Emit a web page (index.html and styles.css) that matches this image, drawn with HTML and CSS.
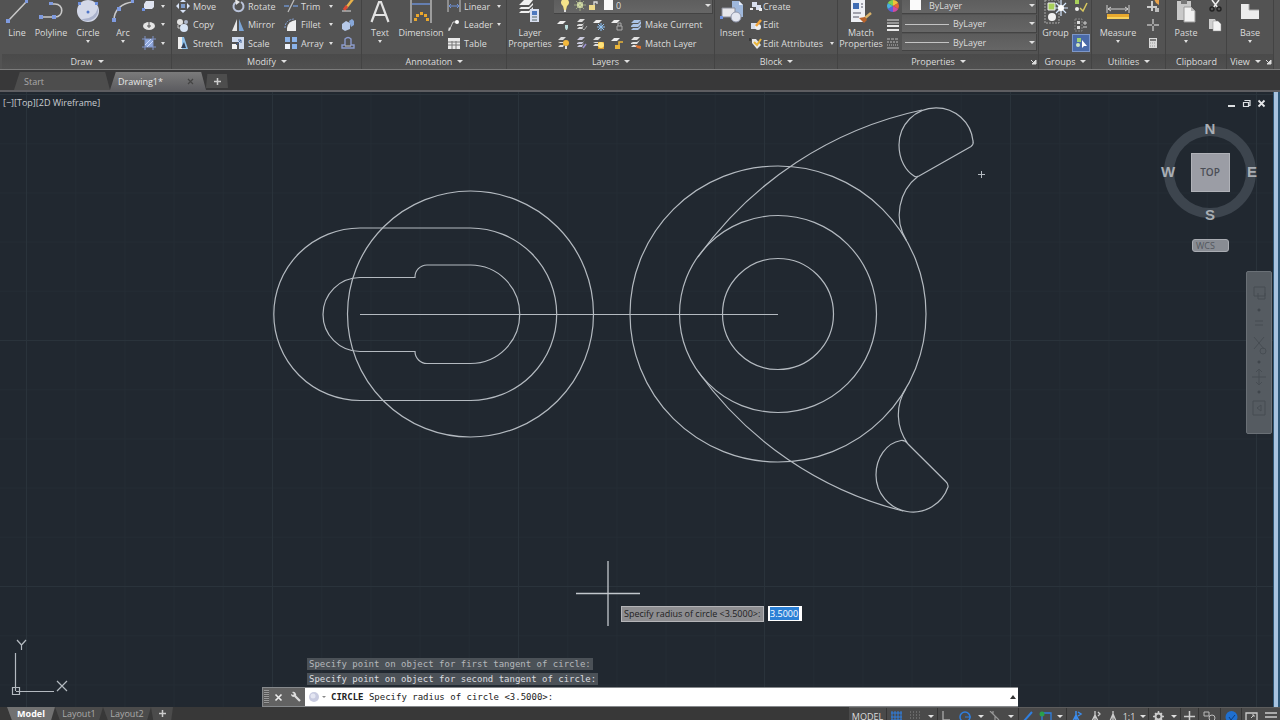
FILE: index.html
```html
<!DOCTYPE html>
<html lang="en">
<head>
<meta charset="utf-8">
<title>Drawing1</title>
<link rel="stylesheet" href="styles.css">
</head>
<body>
<header class="ribbon">
  <section class="panel p-draw">
    <div class="tools">
      <button class="big"><svg width="24" height="24" viewBox="0 0 24 24"><path d="M3 21L22 1" stroke="#c9c9c9" stroke-width="1.5"/><path d="M1 19h4v4h-4zM20 0h3v3h-3z" fill="#7f9be0"/></svg><span>Line</span></button>
      <button class="big"><svg width="26" height="24" viewBox="0 0 26 24"><path d="M3 17H17C26 17 26 4 17 4H12" fill="none" stroke="#c9c9c9" stroke-width="1.6"/><path d="M1 15h4v4h-4zM14 15h4v4h-4zM11 2h4v3h-4z" fill="#7f9be0"/></svg><span>Polyline</span></button>
      <button class="big"><svg width="24" height="24" viewBox="0 0 24 24"><circle cx="12" cy="11" r="11" fill="#d3d8e8"/><path d="M5 19A11 11 0 0 0 22 8Q18 20 5 19" fill="#aab2cc"/><circle cx="12" cy="12" r="1.5" fill="#4f75c8"/><path d="M2 2h3v3h-3zM19 2h3v3h-3z" fill="#6f91df"/></svg><span>Circle</span><i class="caret"></i></button>
      <button class="big"><svg width="24" height="24" viewBox="0 0 24 24"><path d="M3 20C3 10 11 3 22 2" fill="none" stroke="#c9c9c9" stroke-width="1.6"/><path d="M1 18h4v4h-4zM6 7h4v4h-4zM20 0h3v3h-3z" fill="#7f9be0"/></svg><span>Arc</span><i class="caret"></i></button>
      <div class="col">
        <button class="row" aria-label="Rectangle"><svg width="14" height="14" viewBox="0 0 14 14"><path d="M2 5l2-3h8v6l-2 2H2z" fill="#dfe3ef"/><path d="M0 9h3v3h-3z" fill="#6f91df"/></svg><i class="caret"></i></button>
        <button class="row" aria-label="Ellipse"><svg width="14" height="14" viewBox="0 0 14 14"><ellipse cx="7" cy="8" rx="6" ry="4" fill="#e6e6e6"/><path d="M7 3v7M5 8h4" stroke="#555"/></svg><i class="caret"></i></button>
        <button class="row" aria-label="Hatch"><svg width="14" height="14" viewBox="0 0 14 14"><path d="M3 3h8v8h-8z" fill="#8fa8dc"/><path d="M0 3h14M0 11h14M3 0v14M11 0v14" stroke="#8094c8"/><path d="M3 9l6-6M5 11l6-6" stroke="#cfdcff"/></svg><i class="caret"></i></button>
      </div>
    </div>
    <h2>Draw<i class="caret"></i></h2>
  </section>

  <section class="panel p-modify">
    <div class="tools">
      <div class="col">
        <button class="row"><svg width="14" height="14" viewBox="0 0 14 14"><path d="M7 0l3 3H4zM7 14l3-3H4zM0 7l3-3v6zM14 7l-3-3v6z" fill="#d8e3f7"/><path d="M5 5h4v4h-4z" fill="#7d9ac8"/></svg>Move</button>
        <button class="row"><svg width="14" height="14" viewBox="0 0 14 14"><circle cx="4" cy="4" r="3" fill="#e2e2e2"/><circle cx="10" cy="4" r="2" fill="#aeb8cc"/><circle cx="8" cy="10" r="4" fill="#d7e4f6"/><path d="M2 7v3h2" fill="none" stroke="#ccc"/></svg>Copy</button>
        <button class="row"><svg width="14" height="14" viewBox="0 0 14 14"><path d="M2 1h6l4 12H2z" fill="#8fc0ea"/><path d="M2 1h4v12H2z" fill="#eee"/><path d="M5 12l3-6 2 6z" fill="#333f55"/></svg>Stretch</button>
      </div>
      <div class="col">
        <button class="row"><svg width="14" height="14" viewBox="0 0 14 14"><path d="M5 3A5 5 0 1 0 10 3" fill="none" stroke="#b9c3da" stroke-width="2"/><path d="M4 0l5 3-4 3z" fill="#e7e7e7"/></svg>Rotate</button>
        <button class="row"><svg width="14" height="14" viewBox="0 0 14 14"><path d="M6 1v12H1z" fill="#e7e7e7"/><path d="M8 1v12h5z" fill="#7ba4d5"/></svg>Mirror</button>
        <button class="row"><svg width="14" height="14" viewBox="0 0 14 14"><path d="M1 1h12v12H8V6H1z" fill="#cfdaee"/><path d="M1 8h5v5H1z" fill="#f3f3f3"/><path d="M5 9l5-5M7 4h3v3" stroke="#43649a" fill="none"/></svg>Scale</button>
      </div>
      <div class="col">
        <button class="row"><svg width="14" height="14" viewBox="0 0 14 14"><path d="M0 7h5M9 7h5" stroke="#6f91c8" stroke-width="1.5"/><path d="M4 13L10 1" stroke="#bbb" stroke-width="1.3"/></svg>Trim<i class="caret dot"></i></button>
        <button class="row"><svg width="14" height="14" viewBox="0 0 14 14"><path d="M3 13V10Q4 3 12 2V13z" fill="#eee"/><path d="M1 10Q1 2 10 1" fill="none" stroke="#86a6dc" stroke-dasharray="2 1"/></svg>Fillet<i class="caret dot"></i></button>
        <button class="row"><svg width="14" height="14" viewBox="0 0 14 14"><path d="M1 1h5v5H1zM8 1h5v5H8zM8 8h5v5H8z" fill="#8ab2e8"/><path d="M1 8h5v5H1z" fill="#eef2fa"/></svg>Array<i class="caret dot"></i></button>
      </div>
      <div class="col">
        <button class="row" aria-label="Erase"><svg width="14" height="14" viewBox="0 0 14 14"><path d="M12 0l-7 9" stroke="#e8b24a" stroke-width="2.5"/><path d="M6 7l-3 4" stroke="#d94a35" stroke-width="3"/><path d="M1 12h9" stroke="#ddd"/></svg></button>
        <button class="row" aria-label="Explode"><svg width="14" height="14" viewBox="0 0 14 14"><path d="M1 6l4-3 4 2v6l-5 2-3-2z" fill="#b6c9e8"/><path d="M8 3l3-2 2 2v4l-3 2z" fill="#87a7d8"/></svg></button>
        <button class="row" aria-label="Offset"><svg width="14" height="14" viewBox="0 0 14 14"><path d="M1 12h12V9h-3V3Q7 0 4 3v6H1z" fill="none" stroke="#8b9bcd" stroke-width="1.4"/><path d="M4 10h6" stroke="#ccc"/></svg></button>
      </div>
    </div>
    <h2>Modify<i class="caret"></i></h2>
  </section>

  <section class="panel p-annot">
    <div class="tools">
      <button class="big"><svg width="20" height="24" viewBox="0 0 20 24"><path d="M1.500 22L9 2h2l7.500 20M4.500 15h11" fill="none" stroke="#e2e2e2" stroke-width="2.200"/></svg><span>Text</span><i class="caret"></i></button>
      <button class="big"><svg width="24" height="24" viewBox="0 0 24 24"><path d="M2 0v23M22 0v23" stroke="#bdbdbd" stroke-width="1.400"/><path d="M3 4h18" stroke="#6e92da" stroke-width="1.400"/><path d="M5 18h3v3h-3zM7 14h3v3h-3zM11 12h3v3h-3zM15 14h3v3h-3zM17 18h3v3h-3z" fill="#e9a62c"/></svg><span>Dimension</span></button>
      <div class="col">
        <button class="row"><svg width="14" height="14" viewBox="0 0 14 14"><path d="M1 1v12M13 1v12" stroke="#c9c9c9"/><path d="M2 7h10M4 5L2 7l2 2M10 5l2 2-2 2" stroke="#6e92da" fill="none"/></svg>Linear<i class="caret dot"></i></button>
        <button class="row"><svg width="14" height="14" viewBox="0 0 14 14"><path d="M2 13L6 4h4" stroke="#c9c9c9" fill="none"/><circle cx="10" cy="4" r="2" fill="#fff"/><path d="M1 13l1-4 2 2z" fill="#ddd"/></svg>Leader<i class="caret dot"></i></button>
        <button class="row"><svg width="14" height="14" viewBox="0 0 14 14"><path d="M1 2h12v11H1z" fill="#e9e9e9"/><path d="M1 6h12M1 9h12M5 5v8M9 5v8" stroke="#777"/></svg>Table</button>
      </div>
    </div>
    <h2>Annotation<i class="caret"></i></h2>
  </section>

  <section class="panel p-layers">
    <div class="tools">
      <button class="big"><svg width="24" height="24" viewBox="0 0 24 24"><path d="M1 5l5-5h9l-4 5zM1 9l2-2h8l4-4v2l-4 4zM1 13l2-2h8l4-4v2l-4 4z" fill="#f0f0f0"/><path d="M12 9h9v13h-9z" fill="#d7def0"/><path d="M14 11h5v4h-5z" fill="#4d78bf"/><path d="M14 17h5M14 20h5" stroke="#566"/></svg><span>Layer<br>Properties</span></button>
      <div class="layergrid">
        <div class="combo layer">
          <svg width="54" height="14" viewBox="0 0 54 14"><path d="M4 8A4 4 0 1 1 8 8L7 12H5z" fill="#f4e38a"/><path d="M5 12h2v2h-2z" fill="#ddd"/><circle cx="21" cy="7" r="3" fill="#e8eeb8"/><path d="M21 1v12M15 7h12M17 3l8 8M25 3l-8 8" stroke="#aebb8a" stroke-width="0.800"/><path d="M30 7h6v5h-6z" fill="#edd98a"/><path d="M35 7V4h3v2" fill="none" stroke="#ddd" stroke-width="1.300"/><path d="M45 2h9v10h-9z" fill="#f8f8f8"/></svg>
          <select aria-label="Layer"><option>0</option></select><i class="caret"></i>
        </div>
        <div class="line">
          <button class="ico" aria-label="Off"><svg width="14" height="14" viewBox="0 0 14 14"><path d="M1 6l3-3h6l-3 3z" fill="#eee"/><path d="M9 7h3v3l-1 2h-1l-1-2z" fill="#bdd"/></svg></button>
          <button class="ico" aria-label="Isolate"><svg width="14" height="14" viewBox="0 0 14 14"><path d="M3 4l3-3h5L8 4zM3 7l2-1h4l2-2-3 4H3zM3 11l2-2h3l2-2-2 4z" fill="#ddd"/><path d="M8 10l2 2 3-4" fill="none" stroke="#aaa"/></svg></button>
          <button class="ico" aria-label="Freeze"><svg width="14" height="14" viewBox="0 0 14 14"><path d="M1 5l3-3h6L7 5z" fill="#eee"/><path d="M9 5v8M5 9h8M6 6l6 6M12 6l-6 6" stroke="#8ec3f6"/></svg></button>
          <button class="ico" aria-label="Lock"><svg width="14" height="14" viewBox="0 0 14 14"><path d="M1 5l3-3h6L7 5z" fill="#eee"/><path d="M7 8h5v4h-5z" fill="none" stroke="#aaa"/><path d="M8 8V5h3v3" fill="none" stroke="#aaa"/></svg></button>
          <button class="row"><svg width="14" height="14" viewBox="0 0 14 14"><path d="M2 5l3-3h7l-3 3zM2 8l2-2h5l3-3v3L9 9H2zM2 12l2-2h5l3-3v2l-3 3z" fill="#a9c2e6"/></svg>Make Current</button>
        </div>
        <div class="line">
          <button class="ico" aria-label="Turn all on"><svg width="14" height="14" viewBox="0 0 14 14"><path d="M2 4l3-3h5L7 4zM2 7l2-1h4l2-2-3 3zM2 11l2-2h3l2-2-2 4z" fill="#ddd"/><circle cx="10" cy="7" r="3" fill="#f2b83d"/><path d="M9 10h2v3h-2z" fill="#ddd"/></svg></button>
          <button class="ico" aria-label="Unisolate"><svg width="14" height="14" viewBox="0 0 14 14"><path d="M3 4l3-3h5L8 4zM3 7l2-1h4l2-2-3 4H3zM3 11l2-2h3l2-2-2 4z" fill="#c9c9dc"/><path d="M9 12l3-4" stroke="#9a8fd0" stroke-width="1.500"/></svg></button>
          <button class="ico" aria-label="Thaw all"><svg width="14" height="14" viewBox="0 0 14 14"><path d="M1 4l3-3h5L6 4zM1 7l2-1h4l2-2-3 3zM1 10l2-2h5l-2 2z" fill="#ddd"/><path d="M6 6h6v7h-6z" fill="#d99a2e"/><circle cx="9" cy="9" r="3" fill="#ffe37a"/></svg></button>
          <button class="ico" aria-label="Unlock"><svg width="14" height="14" viewBox="0 0 14 14"><path d="M1 5l3-3h6L7 5z" fill="#eee"/><path d="M5 9h5v4h-5z" fill="#e9b53a"/><path d="M9 9V6h4" fill="none" stroke="#e9b53a" stroke-width="1.500"/></svg></button>
          <button class="row"><svg width="14" height="14" viewBox="0 0 14 14"><path d="M2 4l3-3h6L8 4zM2 7l2-1h4l3-2-3 4H2zM2 11l2-2h4v2z" fill="#e2e2e2"/><path d="M6 9l6 1v3l-4-1z" fill="#d9702e"/></svg>Match Layer</button>
        </div>
      </div>
    </div>
    <h2>Layers<i class="caret"></i></h2>
  </section>

  <section class="panel p-block">
    <div class="tools">
      <button class="big"><svg width="24" height="24" viewBox="0 0 24 24"><path d="M12 1h7l4 4v12H12z" fill="#9fb8dc"/><path d="M19 1v4h4" fill="#e8eefa"/><path d="M2 8h13v9H2z" fill="#e6e6ea" stroke="#8a8d99"/><circle cx="16" cy="17" r="5" fill="#e3e6ef" stroke="#8f96ab"/><path d="M0 16h3v3h-3z" fill="#6f91df"/></svg><span>Insert</span></button>
      <div class="col">
        <button class="row"><svg width="14" height="14" viewBox="0 0 14 14"><path d="M3 3h5v5H3zM7 6h5v5H7z" fill="#d7deec"/><path d="M1 9h3v2h-3zM10 9h3v3h-3z" fill="#eee"/></svg>Create</button>
        <button class="row"><svg width="14" height="14" viewBox="0 0 14 14"><path d="M2 5h6v6H2z" fill="#d7deec"/><circle cx="9" cy="9" r="3" fill="#eee"/><path d="M12 2L7 8" stroke="#f0a33a" stroke-width="2.500"/></svg>Edit</button>
        <button class="row"><svg width="14" height="14" viewBox="0 0 14 14"><path d="M3 3l4 0 5 6-4 4-5-6z" fill="#e6e6e6"/><path d="M5 6l3 3 4-6" fill="none" stroke="#e9b53a" stroke-width="2"/><path d="M1 2v3" stroke="#222"/></svg>Edit Attributes<i class="caret dot"></i></button>
      </div>
    </div>
    <h2>Block<i class="caret"></i></h2>
  </section>

  <section class="panel p-props">
    <div class="tools">
      <button class="big"><svg width="24" height="24" viewBox="0 0 24 24"><path d="M2 0h14v22H2z" fill="#eef0f5"/><path d="M4 3h6v6H4z" fill="#3f6cb3"/><path d="M12 4h2M12 7h2M4 13h8M4 17h6" stroke="#556" stroke-width="1.200"/><path d="M22 13l-6 5" stroke="#d8b26a" stroke-width="2.500"/><path d="M10 18l6-1 2 3-3 3z" fill="#b8622a"/></svg><span>Match<br>Properties</span></button>
      <div class="col icons">
        <button class="ico" aria-label="Color"><svg width="14" height="14" viewBox="0 0 14 14"><path d="M7 7V1A6 6 0 0 1 12.200 4z" fill="#f0c23a"/><path d="M7 7L12.200 4A6 6 0 0 1 12.200 10z" fill="#e8623a"/><path d="M7 7l5.200 3A6 6 0 0 1 7 13z" fill="#d34aa0"/><path d="M7 7v6A6 6 0 0 1 1.800 10z" fill="#5a62d8"/><path d="M7 7L1.800 10A6 6 0 0 1 1.800 4z" fill="#48b0e0"/><path d="M7 7L1.800 4A6 6 0 0 1 7 1z" fill="#7ccf52"/></svg></button>
        <button class="ico" aria-label="Lineweight"><svg width="14" height="14" viewBox="0 0 14 14"><path d="M1 2h12M1 5h12" stroke="#ddd"/><path d="M1 8h12M1 12h12" stroke="#e8e8e8" stroke-width="2"/></svg></button>
        <button class="ico" aria-label="Linetype"><svg width="14" height="14" viewBox="0 0 14 14"><path d="M1 3h12" stroke="#bbb" stroke-dasharray="3 1"/><path d="M1 6h12" stroke="#bbb" stroke-dasharray="2 1"/><path d="M1 9h12" stroke="#bbb" stroke-dasharray="1 1"/><path d="M1 12h12" stroke="#bbb"/></svg></button>
      </div>
      <div class="col combos">
        <div class="combo"><svg width="22" height="14" viewBox="0 0 22 14"><path d="M6 2h11v10H6z" fill="#fafafa"/></svg><select aria-label="Object color"><option>ByLayer</option></select><i class="caret"></i></div>
        <div class="combo"><svg width="46" height="14" viewBox="0 0 46 14"><path d="M1 7.500h44" stroke="#c4c4c4"/></svg><select aria-label="Object lineweight"><option>ByLayer</option></select><i class="caret"></i></div>
        <div class="combo"><svg width="46" height="14" viewBox="0 0 46 14"><path d="M1 7.500h44" stroke="#c4c4c4"/></svg><select aria-label="Object linetype"><option>ByLayer</option></select><i class="caret"></i></div>
      </div>
    </div>
    <h2>Properties<i class="caret"></i><svg class="launch" width="6" height="6" viewBox="0 0 6 6"><path d="M0 1l3 3M5 1v4H1z" stroke="#ddd" fill="#ddd"/></svg></h2>
  </section>

  <section class="panel p-groups">
    <div class="tools">
      <button class="big"><svg width="26" height="24" viewBox="0 0 26 24"><path d="M2 0h14v23H2z" fill="none" stroke="#aaa" stroke-dasharray="2 1"/><path d="M5 3h7v7H5z" fill="#a8d05a" stroke="#eee"/><circle cx="9" cy="17" r="4" fill="#f0f0f0"/><path d="M18 0v16M11 8h14M13 3l10 10M23 3L13 13" stroke="#d7e8ff" stroke-width="1.200"/><circle cx="18" cy="8" r="3" fill="#fff"/></svg><span>Group</span></button>
      <div class="col icons">
        <button class="ico" aria-label="Ungroup"><svg width="14" height="14" viewBox="0 0 14 14"><path d="M1 1h4v4H1z" fill="#a8d05a"/><circle cx="3" cy="10" r="2" fill="#eee"/><path d="M6 9l3 3 4-8" fill="none" stroke="#d8c860" stroke-width="1.500"/></svg></button>
        <button class="ico" aria-label="Group edit"><svg width="14" height="14" viewBox="0 0 14 14"><path d="M1 1h7v12H1z" fill="none" stroke="#888" stroke-dasharray="2 1"/><path d="M3 3h3v3H3zM3 8h3v3H3z" fill="#ddd"/><path d="M9 5h4M9 9h4M11 3v4" stroke="#ccc"/></svg></button>
        <button class="ico active" aria-label="Group selection"><svg width="14" height="14" viewBox="0 0 14 14"><path d="M3 2h4v4H3z" fill="#9fcf72"/><circle cx="4" cy="9" r="2" fill="#cfe6c0"/><path d="M8 4v8l2-2h3z" fill="#fff"/></svg></button>
      </div>
    </div>
    <h2>Groups<i class="caret"></i></h2>
  </section>

  <section class="panel p-utils">
    <div class="tools">
      <button class="big"><svg width="24" height="24" viewBox="0 0 24 24"><path d="M1 5v8M23 5v8M2 9h20M5 7L2 9l3 2M19 7l3 2-3 2" stroke="#d2d2d2" fill="none"/><path d="M1 14h22v5H1z" fill="#e8a92e"/><path d="M1 17h22v2H1z" fill="#f7d15c"/></svg><span>Measure</span><i class="caret"></i></button>
      <div class="col icons">
        <button class="ico" aria-label="Quick select"><svg width="14" height="14" viewBox="0 0 14 14"><path d="M6 2v10M1 8h10" stroke="#ccc" stroke-width="2"/><path d="M8 0h5v6l-3-2z" fill="#e8a24a"/><path d="M9 9h4v4h-4z" fill="#bbb"/></svg></button>
        <button class="ico" aria-label="ID point"><svg width="14" height="14" viewBox="0 0 14 14"><path d="M7 1v12M1 7h12" stroke="#bbb" stroke-width="1.500"/><circle cx="7" cy="7" r="1" fill="#444"/></svg></button>
        <button class="ico" aria-label="Calculator"><svg width="14" height="14" viewBox="0 0 14 14"><path d="M3 2h8v10H3z" fill="#d8d8d8"/><path d="M4 3h6v2H4z" fill="#777"/><path d="M4 7h6M4 10h6" stroke="#999" stroke-dasharray="1 1"/></svg></button>
      </div>
    </div>
    <h2>Utilities<i class="caret"></i></h2>
  </section>

  <section class="panel p-clip">
    <div class="tools">
      <button class="big"><svg width="24" height="24" viewBox="0 0 24 24"><path d="M3 1h14v19H3z" fill="#c9c9c9"/><path d="M7 0h6v4H7z" fill="#777"/><path d="M10 7h7l4 4v11H10z" fill="#f1f1f1" stroke="#999"/><path d="M17 7v4h4" fill="#bbb"/></svg><span>Paste</span><i class="caret"></i></button>
      <div class="col icons">
        <button class="ico" aria-label="Cut"><svg width="14" height="14" viewBox="0 0 14 14"><path d="M4 1l6 8M11 1L5 9" stroke="#eee" stroke-width="1.500"/><circle cx="4" cy="10" r="2" fill="none" stroke="#222" stroke-width="1.400"/><circle cx="11" cy="10" r="2" fill="none" stroke="#222" stroke-width="1.400"/></svg></button>
        <button class="ico" aria-label="Copy"><svg width="14" height="14" viewBox="0 0 14 14"><path d="M1 1h6l1 2v8H1z" fill="#cfcfcf"/><path d="M5 3h5l3 3v7H5z" fill="#f3f3f3" stroke="#888" stroke-width="0.500"/></svg></button>
      </div>
    </div>
    <h2>Clipboard</h2>
  </section>

  <section class="panel p-view">
    <div class="tools">
      <button class="big"><svg width="22" height="24" viewBox="0 0 22 24"><path d="M2 4h8v6h10v9H2z" fill="#ebebeb"/><path d="M10 4v6h10" fill="none" stroke="#aaa"/></svg><span>Base</span><i class="caret"></i></button>
    </div>
    <h2>View<i class="caret"></i><svg class="launch" width="6" height="6" viewBox="0 0 6 6"><path d="M0 1l3 3M5 1v4H1z" stroke="#ddd" fill="#ddd"/></svg></h2>
  </section>
</header>

<nav class="files">
  <button class="file">Start</button>
  <button class="file on">Drawing1*<svg width="7" height="7" viewBox="0 0 7 7"><path d="M1 1l5 5M6 1L1 6" stroke="#444" stroke-width="1.200"/></svg></button>
  <button class="file add" aria-label="New tab"><svg width="7" height="7" viewBox="0 0 7 7"><path d="M3.500 0v7M0 3.500h7" stroke="#ccc" stroke-width="1.500"/></svg></button>
</nav>

<main class="canvas">
  <svg class="drawing" viewBox="0 92 1280 615" preserveAspectRatio="xMidYMid slice">
    <defs>
      <pattern id="minor" x="26" y="94" width="49.200" height="49.200" patternUnits="userSpaceOnUse"><path d="M0.500 0V50M0 0.500H50" stroke="#242c34"/></pattern>
      <pattern id="major" x="26" y="94" width="246" height="246" patternUnits="userSpaceOnUse"><path d="M0.500 0V246M0 0.500H246" stroke="#2a333b"/></pattern>
    </defs>
    <rect x="0" y="92" width="1280" height="615" fill="url(#minor)"/>
    <rect x="0" y="92" width="1280" height="615" fill="url(#major)"/>
    <g class="geometry">
      <circle cx="470.500" cy="314" r="123"/>
      <path d="M360 228H470.500A86 86 0 0 1 470.500 400.500H360A86 86 0 0 1 360 228Z"/>
      <path d="M360 277.500H415A12 12 0 0 1 427 265H470.500A49 49 0 0 1 470.500 363.500H427A12 12 0 0 1 415 351.500H360A37 37 0 0 1 360 277.500Z"/>
      <path d="M360 314.500H778"/>
      <circle cx="778" cy="314" r="148"/>
      <circle cx="778" cy="314" r="98.500"/>
      <circle cx="778" cy="314" r="55.500"/>
      <path d="M698 257A370 370 0 0 1 922 110"/>
      <path d="M936 107.800A37 37 0 0 0 899 145C899 160 906 171 914 176Q916 177.500 919 176L971 146.500Q974 144 973 141A37 37 0 0 0 936 107.800"/>
      <path d="M918.300 176A49 49 0 0 0 906.500 240.500"/>
      <path d="M698 371.500A360 360 0 0 0 903 511"/>
      <path d="M908 444Q905 440 901 440.500C886 443 876 458 876 475A37 37 0 0 0 948 487Q948.500 484 946 481.700L908 444A49 49 0 0 1 906 388.500"/>
    </g>
    <path class="mark" d="M981.500 171v7M978 174.500h7"/>
    <path class="cross" d="M608 561V626M576 593.500H640"/>
    <g class="ucs">
      <path d="M12.500 687.500h7v7h-7zM15.500 653V691M16 691.500H54"/>
      <path d="M57 681l10 10M67 681l-10 10M17 640l4.500 5 4.500-5M21.500 645v5"/>
    </g>
  </svg>

  <button class="viewlabel">[−][Top][2D Wireframe]</button>

  <div class="winbtns">
    <button aria-label="Minimize"><svg width="9" height="9" viewBox="0 0 9 9"><path d="M1 6h7v2H1z" fill="#dcdfe2"/></svg></button>
    <button aria-label="Restore"><svg width="9" height="9" viewBox="0 0 9 9"><path d="M1.500 3.500h5v4h-5zM3 2V1.500h5v5h-1" fill="none" stroke="#dcdfe2" stroke-width="1.200"/></svg></button>
    <button aria-label="Close"><svg width="9" height="9" viewBox="0 0 9 9"><path d="M1.500 1.500l6 6M7.500 1.500l-6 6" stroke="#e4e6e8" stroke-width="1.800"/></svg></button>
  </div>

  <div class="viewcube">
    <span class="n">N</span><span class="w">W</span><button class="face">TOP</button><span class="e">E</span><span class="s">S</span>
  </div>
  <button class="wcs">WCS</button>

  <div class="navbar">
    <svg width="17" height="140" viewBox="0 0 17 140" fill="none" stroke="#474d53">
      <path d="M3 4h11v9H3zM7 10v6h7v-6"/><path d="M7 26h2v2h-2z" fill="#30363c"/><path d="M4 38h8M4 42h8"/><path d="M3 54l10 12M13 54L3 66"/><circle cx="12" cy="68" r="3"/><path d="M7 78h2v2h-2z" fill="#30363c"/><path d="M8 86v16M1 94h14M5 89l3-3 3 3M5 99l3 3 3-3"/><path d="M7 108h2v2h-2z" fill="#30363c"/><path d="M2 118h12v14H2zM6 125l4-3v6z"/>
    </svg>
  </div>

  <div class="edge"></div>

  <label class="dyn"><span>Specify radius of circle &lt;3.5000&gt;:</span><input value="3.5000"></label>

  <div class="command">
    <p>Specify point on object for first tangent of circle:</p>
    <p>Specify point on object for second tangent of circle:</p>
    <div class="cmdbar">
      <div class="grip"></div>
      <button aria-label="Close"><svg width="9" height="9" viewBox="0 0 9 9"><path d="M1.500 1.500l6 6M7.500 1.500l-6 6" stroke="#eee" stroke-width="1.600"/></svg></button>
      <button aria-label="Customize"><svg width="12" height="12" viewBox="0 0 12 12"><path d="M5 5l5 5" stroke="#ddd" stroke-width="2.200"/><path d="M2 1l2 2-1 1-2-1Q1 6 4 6 7 5 6 3 5 0 2 1" fill="#ddd"/></svg></button>
      <div class="prompt">
        <svg width="20" height="12" viewBox="0 0 20 12"><circle cx="6" cy="6" r="5" fill="#c8cbe0"/><circle cx="5" cy="5" r="2.500" fill="#e4e6f2"/><path d="M14 5h4l-2 2z" fill="#888"/></svg>
        <span><b>CIRCLE</b> Specify radius of circle &lt;3.5000&gt;:</span>
        <input aria-label="Command">
        <button aria-label="History"><svg width="6" height="4" viewBox="0 0 6 4"><path d="M0 4l3-4 3 4z" fill="#333"/></svg></button>
      </div>
    </div>
  </div>
</main>

<footer class="bottom">
  <nav class="layouts">
    <button class="layout on">Model</button><button class="layout">Layout1</button><button class="layout">Layout2</button><button class="layout plus" aria-label="New layout"><svg width="7" height="7" viewBox="0 0 7 7"><path d="M3.500 0v7M0 3.500h7" stroke="#ccc" stroke-width="1.500"/></svg></button>
  </nav>
  <div class="status">
    <button>MODEL</button>
    <button class="sep" aria-label="Grid"><svg width="11" height="11" viewBox="0 0 11 11"><path d="M1 0v11M4 0v11M7 0v11M10 0v11M0 2h11M0 6h11M0 9h11" stroke="#2f7fe0"/></svg></button>
    <button aria-label="Snap"><svg width="11" height="11" viewBox="0 0 11 11"><path d="M0 1h11M0 4h11M0 7h11M0 10h11" stroke="#888" stroke-dasharray="1 2"/></svg></button>
    <button aria-label="Snap options"><i class="caret"></i></button>
    <button class="sep" aria-label="Ortho"><svg width="9" height="11" viewBox="0 0 9 11"><path d="M2 0v9h7" fill="none" stroke="#aaa" stroke-width="1.300"/></svg></button>
    <button aria-label="Polar"><svg width="12" height="11" viewBox="0 0 12 11"><circle cx="6" cy="6" r="5" fill="none" stroke="#2f7fe0" stroke-width="1.500"/><path d="M6 6h6" stroke="#2f7fe0"/></svg></button>
    <button aria-label="Polar options"><i class="caret"></i></button>
    <button aria-label="Isodraft"><svg width="11" height="11" viewBox="0 0 11 11"><path d="M1 0l9 9M6 5v6M4 0v3" stroke="#999" stroke-width="1.200"/></svg></button>
    <button aria-label="Isodraft options"><i class="caret"></i></button>
    <button class="sep" aria-label="Tracking"><svg width="11" height="11" viewBox="0 0 11 11"><path d="M10 1L2 10" stroke="#2f7fe0" stroke-width="2"/></svg></button>
    <button aria-label="Object snap"><svg width="13" height="11" viewBox="0 0 13 11"><path d="M3 2h9v9H3z" fill="none" stroke="#2f7fe0" stroke-width="1.300"/><circle cx="3" cy="3" r="2.500" fill="#2aa04a"/></svg></button>
    <button aria-label="Object snap options"><i class="caret"></i></button>
    <button class="sep" aria-label="Annotation visibility"><svg width="11" height="11" viewBox="0 0 11 11"><path d="M4 0v11M1 10l3-6 3 6M6 1l3 2-3 2" fill="none" stroke="#3b8dee" stroke-width="1.500"/></svg></button>
    <button aria-label="Auto scale"><svg width="11" height="11" viewBox="0 0 11 11"><path d="M4 0v11M1 10l3-6 3 6M7 1l2 2-2 2" fill="none" stroke="#ccc" stroke-width="1.300"/></svg></button>
    <button aria-label="Annotation scale"><svg width="9" height="11" viewBox="0 0 9 11"><path d="M4 0v11M1 10l3-7 3 7" fill="none" stroke="#ccc" stroke-width="1.300"/></svg></button>
    <button>1:1</button>
    <button aria-label="Scale options"><i class="caret"></i></button>
    <button class="sep" aria-label="Workspace"><svg width="11" height="11" viewBox="0 0 11 11"><circle cx="5.500" cy="5.500" r="3" fill="none" stroke="#ccc" stroke-width="2"/><path d="M5.500 0v2M5.500 9v2M0 5.500h2M9 5.500h2M2 2l1 1M8 8l1 1M9 2L8 3M3 8L2 9" stroke="#ccc" stroke-width="1.500"/></svg></button>
    <button aria-label="Workspace options"><i class="caret"></i></button>
    <button class="sep" aria-label="Monitor"><svg width="11" height="11" viewBox="0 0 11 11"><path d="M5.500 0v11M0 5.500h11" stroke="#ccc" stroke-width="1.500"/></svg></button>
    <button class="sep" aria-label="Isolate objects"><svg width="13" height="11" viewBox="0 0 13 11"><path d="M1 1h5v4H1z" fill="none" stroke="#bbb"/><circle cx="9" cy="7" r="3" fill="none" stroke="#bbb"/></svg></button>
    <button class="sep" aria-label="Hardware acceleration"><svg width="13" height="12" viewBox="0 0 13 12"><circle cx="6.500" cy="6" r="6" fill="#1f6fd0"/><path d="M4 6l2 3 4-5" fill="none" stroke="#0d3f80"/></svg></button>
    <button class="sep" aria-label="Clean screen"><svg width="13" height="11" viewBox="0 0 13 11"><path d="M1 2h11v8H1z" fill="none" stroke="#ccc" stroke-width="1.300"/><path d="M6 7l3-3M7 4h2v2" stroke="#ccc"/></svg></button>
    <button aria-label="Customize"><svg width="12" height="11" viewBox="0 0 12 11"><path d="M0 2h12M0 6h12M0 10h12" stroke="#ccc" stroke-width="1.500"/></svg></button>
  </div>
</footer>
</body>
</html>
```
FILE: styles.css
```css
*, *::before { box-sizing: border-box; }
body {
  margin: 0;
  height: 100vh;
  display: flex;
  flex-direction: column;
  overflow: hidden;
  background: #383839;
  color: #dcdcdc;
  font: 9px/11px "Open Sans", "Noto Sans", sans-serif;
}
button, select, input { font: inherit; color: inherit; }
button { display: flex; align-items: center; padding: 0; border: 0; background: none; white-space: nowrap; }
svg { flex: none; display: block; }
h2, p { margin: 0; font: inherit; }

.caret { flex: none; width: 0; height: 0; border: 3px solid transparent; border-top: 3px solid #e0e0e0; border-bottom: 0; }

/* Ribbon */
.ribbon { display: flex; flex: none; height: 70px; padding: 0 6px 0 2px; background: #535353; border-bottom: 1px solid #7b7b7b; overflow: hidden; }
.panel { display: flex; flex-direction: column; min-width: 0; box-shadow: inset -1px 0 #434343; }
.p-draw { flex: 170 1 0; }
.p-modify { flex: 190 1 0; }
.p-annot { flex: 145 1 0; }
.p-layers { flex: 208 1 0; }
.p-block { flex: 123 1 0; }
.p-props { flex: 201 1 0; }
.p-groups { flex: 53 1 0; }
.p-utils { flex: 74 1 0; }
.p-clip { flex: 61 1 0; }
.p-view { flex: 47 1 0; }
.tools { display: flex; height: 54px; }
.panel h2 { position: relative; display: flex; align-items: center; justify-content: center; gap: 5px; height: 15px; background: linear-gradient(#4a4a4a, #505050); box-shadow: inset -1px 0 #434343; }
.p-view h2 { padding-right: 10px; }
.launch { position: absolute; right: 2px; bottom: 4px; }

.big { flex: none; flex-direction: column; height: 54px; color: #dcdcdc; }
.big span { margin-top: 3px; text-align: center; }
.big .caret { margin-top: 2px; border-width: 2px; border-top-width: 3px; border-bottom-width: 0; }
.col { display: grid; grid-template-rows: 18px 19px 18px; height: 55px; margin-top: -3px; }
.row { gap: 3px; }
.row .caret { border-width: 2px; border-top-width: 3px; border-bottom-width: 0; margin-left: 2px; }
.row .dot { margin-left: auto; }
.ico { justify-content: center; width: 18px; }
.active { background: #4a6aa8; outline: 1px solid #7d97c8; outline-offset: -1px; }

.p-draw .tools { display: grid; grid-template-columns: 30px 38px 36px 34px 28px; }
.p-draw .col { padding-left: 2px; }
.p-modify .tools { display: grid; grid-template-columns: 55px 53px 57px 16px; padding-left: 4px; }
.p-modify .col:nth-child(3) .row { padding-right: 8px; }
.p-annot .tools { display: grid; grid-template-columns: 36px 44px 57px; gap: 1px; }
.p-annot .col { padding-left: 3px; }
.p-layers .tools { display: flex; padding-left: 1px; }
.p-layers .big { width: 44px; }
.layergrid { display: grid; grid-template-rows: 18px 19px 18px; flex: 1; height: 55px; margin: -3px 2px 0 2px; }
.line { display: flex; }
.line .row { gap: 2px; padding-left: 3px; }
.p-block .big { width: 34px; }
.p-block .col { flex: 1; padding-right: 4px; }
.p-block .row { gap: 0; }
.p-props .big { width: 46px; }
.combos { flex: 1; margin-right: 2px; }
.p-groups .big { width: 33px; }
.p-utils .big { width: 52px; }
.p-clip .big { width: 40px; }
.p-view .big { width: 46px; }

.combo { display: flex; align-items: center; margin-bottom: 1px; padding: 0 1px 0 5px; border: 1px solid #434343; border-width: 0 1px 1px 0; background: linear-gradient(#5c5c5c, #666); }
.combo select { flex: 1; min-width: 0; padding: 0 0 0 3px; border: 0; background: none; appearance: none; }
.combos .combo { padding-left: 2px; }

/* File tabs */
.files { display: flex; align-items: flex-end; flex: none; height: 22px; padding-left: 14px; border-bottom: 2px solid #5d5d61; }
.file { justify-content: space-between; width: 96px; height: 18px; padding: 0 12px 0 10px; background: #4d4d4d; color: #aaa; clip-path: polygon(6% 0, 95% 0, 100% 100%, 0 100%); }
.file.on { padding: 0 12px 0 8px; background: linear-gradient(#7b7b7b, #5d5d61); color: #e6e6e6; }
.file.add { justify-content: center; width: 22px; height: 14px; margin-bottom: 2px; padding: 0; }

/* Drawing area */
.canvas { position: relative; flex: 1; min-height: 0; background: #212830; overflow: hidden; }
.drawing { position: absolute; inset: 0; width: 100%; height: 100%; }
.geometry { fill: none; stroke: #b4bac0; stroke-width: 1.200; }
.mark { stroke: #b4bac0; }
.cross { stroke: #c2c7cc; stroke-width: 1.300; }
.ucs { fill: none; stroke: #b4bac0; stroke-width: 1.200; }
.viewlabel { position: absolute; left: 3px; top: 5px; color: #c9cdd1; }
.winbtns { position: absolute; right: 14px; top: 7px; display: flex; gap: 6px; }
.viewcube { position: absolute; right: 18px; top: 27px; width: 104px; height: 106px; display: grid; grid-template: 20px 1fr 20px / 20px 1fr 20px; place-items: center; font: bold 15px/16px "Liberation Sans", Arial, sans-serif; color: #a9aeb4; }
.viewcube::before { content: ""; position: absolute; left: 6px; top: 7px; width: 92px; height: 92px; border: 10px solid #3d454e; border-radius: 50%; }
.viewcube > * { position: relative; }
.n, .s { grid-column: 2; }
.w, .face, .e { grid-row: 2; }
.face { justify-content: center; width: 39px; height: 39px; background: #9b9da5; border: 1px solid #b0b2b8; font: 600 10px/12px "Open Sans", sans-serif; color: #4a4d55; }
.wcs { position: absolute; right: 51px; top: 147px; width: 37px; height: 13px; padding-left: 3px; border: 1px solid #a9acb2; border-radius: 3px; background: #888c93; color: #53575e; }
.navbar { position: absolute; right: 8px; top: 179px; width: 26px; height: 163px; display: grid; place-items: center; border: 1px solid #6a7076; border-radius: 2px; background: #555b61; }
.edge { position: absolute; right: 0; top: 0; bottom: 0; width: 7px; border: 1px solid #2f5878; border-width: 0 2px 0 1px; background: #a8c3e0; }

.dyn { position: absolute; left: 621px; top: 514px; display: flex; gap: 4px; }
.dyn span { width: 143px; height: 16px; padding: 1px 2px; border: 1px solid #b5b5b8; background: #8d8d90; color: #1d1d1f; white-space: nowrap; }
.dyn input { width: 34px; height: 15px; padding: 1px 3px 1px 2px; border: 0; background: linear-gradient(#2b80d6, #2b80d6) content-box, #fff; color: #fff; }

.command { position: absolute; left: 262px; right: 262px; bottom: 0; font: 9px/12px "DejaVu Sans Mono", monospace; }
.command p { width: max-content; height: 12px; margin: 0 0 3px 45px; padding: 0 2px; background: #4b5157; color: #b5b8bb; }
.command p + p { margin-bottom: 2px; color: #dcdee0; }
.cmdbar { display: flex; height: 20px; background: #626262; border: 1px solid #86898c; border-right: 0; }
.cmdbar > button { width: 18px; justify-content: center; }
.grip { width: 5px; margin: 2px 0 2px 1px; background: repeating-linear-gradient(#999 0 1px, #555 1px 2px); }
.prompt { display: flex; align-items: center; flex: 1; gap: 3px; padding: 0 2px 0 3px; background: #fff; color: #222; white-space: pre; }
.prompt input { flex: 1; min-width: 0; border: 0; padding: 0; outline: 0; }

/* Layout tabs and status bar */
.bottom { display: flex; justify-content: space-between; flex: none; height: 13px; background: #383838; }
.layouts { display: flex; padding-left: 7px; }
.layout { justify-content: center; width: 48px; height: 13px; background: #4b4b4b; color: #aaa; clip-path: polygon(0 0, 100% 0, 92% 100%, 10% 100%); }
.layout.on { background: #717171; color: #fff; font-weight: bold; }
.layout.plus { width: 22px; }
.status {
  display: grid;
  grid-template-columns: 37px 20px 18px 13px 16px 23px 10px 17px 15px 18px 18px 12px 21px 18px 16px 16px 11px 20px 12px 18px 22px 21px 20px 19px;
  height: 18px;
  background: #4a4a4a;
  border-top: 1px solid #5c5c5c;
}
.status button { justify-content: center; }
.status .sep { border-left: 1px solid #343434; }
```
